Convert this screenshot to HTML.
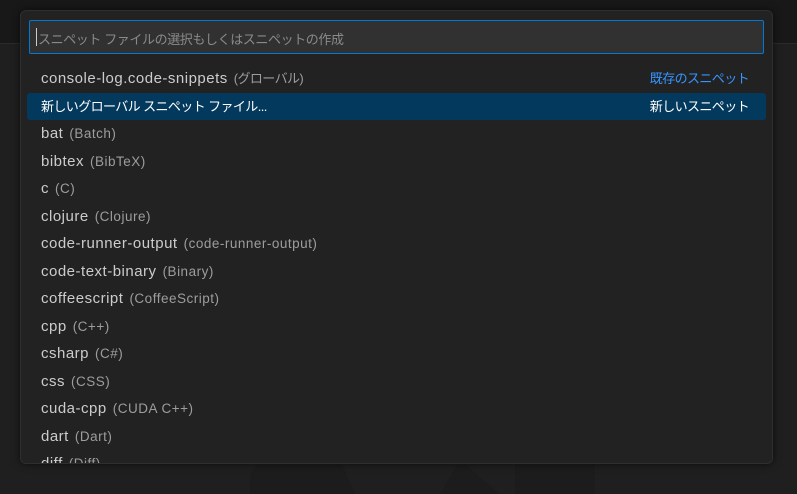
<!DOCTYPE html>
<html><head><meta charset="utf-8"><style>
body{margin:0;width:797px;height:494px;background:#1f1f1f;overflow:hidden;position:relative;font-family:"Liberation Sans","Noto Sans CJK JP",sans-serif;}
.top{position:absolute;left:0;top:0;width:797px;height:43px;background:#181818;border-bottom:1px solid #2b2b2b;}
.wm{position:absolute;left:0;top:0}
.w{position:absolute;left:20px;top:10px;width:751px;height:452px;background:#222222;border:1px solid #2e2e2e;border-radius:6px;box-shadow:0 0 8px rgba(0,0,0,.6);overflow:hidden;}
.in{position:absolute;left:8px;top:9px;width:735px;height:34px;background:#313131;border:1px solid #0078d4;border-radius:2px;box-sizing:border-box;}
.in span{position:absolute;left:8px;top:8px;font-size:13px;letter-spacing:-0.4px;color:#8a8a8a;}
.in i{position:absolute;left:6px;top:7px;width:1px;height:18px;background:#ccc}
.r{position:absolute;left:6px;width:739px;height:27px;font-size:15px;letter-spacing:0.5px;color:#cccccc;line-height:27px;}
.r b{font-weight:normal;padding-left:14px}
.r em{font-style:normal;color:#9d9d9d;font-size:13.5px;letter-spacing:0.5px;margin-left:6px}
.j{font-size:13px!important;letter-spacing:-0.6px!important}
.sel{background:#04395e;border-radius:3px;color:#fff}
.rt{position:absolute;right:17px;top:0}
</style></head><body>
<div class="top"></div>
<svg class="wm" width="797" height="494"><path d="M250 494 L250 475 Q255 465 265 460 L340 460 L355 494Z" fill="#1c1c1c"/><path d="M460 460 L500 494 L440 494 Z" fill="#1c1c1c"/><rect x="515" y="460" width="80" height="34" fill="#1c1c1c"/></svg>
<div class="w">
<div class="in"><i></i><span>スニペット ファイルの選択もしくはスニペットの作成</span></div>
<div class="r" style="top:54px"><b>console-log.code-snippets</b><em class="j">(グローバル)</em><span class="rt j" style="color:#3794ff">既存のスニペット</span></div>
<div class="r sel" style="top:82px"><b class="j">新しいグローバル スニペット ファイル...</b><span class="rt j">新しいスニペット</span></div>
<div class="r" style="top:109px"><b>bat</b><em>(Batch)</em></div>
<div class="r" style="top:137px"><b>bibtex</b><em>(BibTeX)</em></div>
<div class="r" style="top:164px"><b>c</b><em>(C)</em></div>
<div class="r" style="top:192px"><b>clojure</b><em>(Clojure)</em></div>
<div class="r" style="top:219px"><b>code-runner-output</b><em>(code-runner-output)</em></div>
<div class="r" style="top:247px"><b>code-text-binary</b><em>(Binary)</em></div>
<div class="r" style="top:274px"><b>coffeescript</b><em>(CoffeeScript)</em></div>
<div class="r" style="top:302px"><b>cpp</b><em>(C++)</em></div>
<div class="r" style="top:329px"><b>csharp</b><em>(C#)</em></div>
<div class="r" style="top:357px"><b>css</b><em>(CSS)</em></div>
<div class="r" style="top:384px"><b>cuda-cpp</b><em>(CUDA C++)</em></div>
<div class="r" style="top:412px"><b>dart</b><em>(Dart)</em></div>
<div class="r" style="top:439px"><b>diff</b><em>(Diff)</em></div>
</div>
</body></html>
